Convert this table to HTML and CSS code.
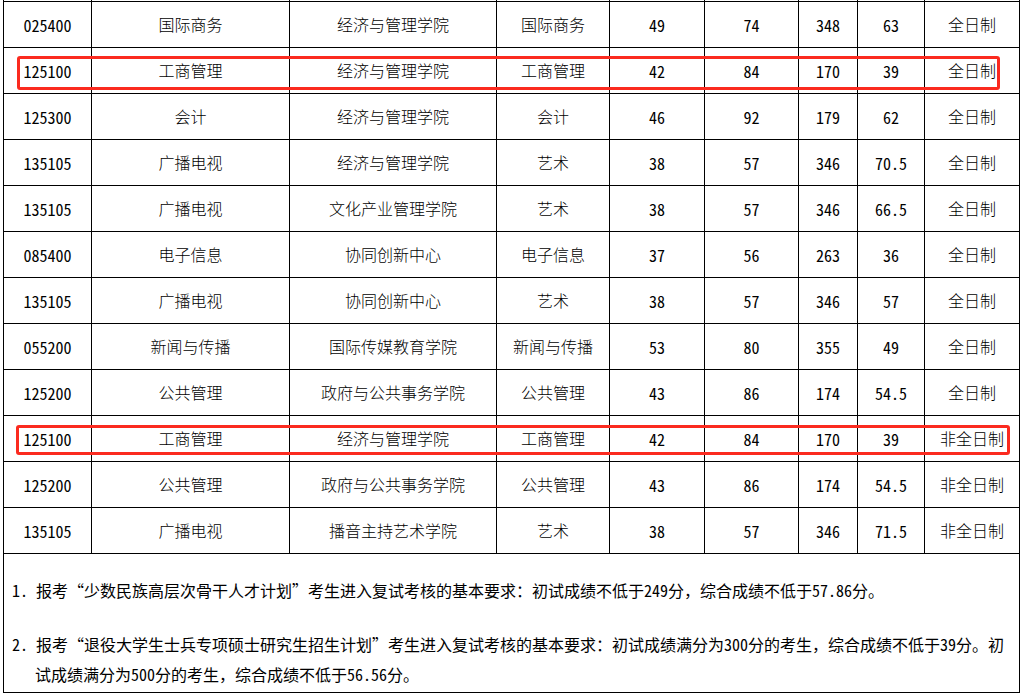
FILE: index.html
```html
<!DOCTYPE html>
<html lang="zh-CN">
<head>
<meta charset="utf-8">
<title>复试基本要求</title>
<link rel="stylesheet" href="styles.css">
</head>
<body>
<div class="wrap">
  <table class="grid">
    <colgroup>
      <col class="c1"><col class="c2"><col class="c3"><col class="c4"><col class="c5"><col class="c6"><col class="c7"><col class="c8"><col class="c9">
    </colgroup>
    <tbody>
      <tr class="cut"><td></td><td></td><td></td><td></td><td></td><td></td><td></td><td></td><td></td></tr>
      <tr><td class="num">025400</td><td>国际商务</td><td>经济与管理学院</td><td>国际商务</td><td class="num">49</td><td class="num">74</td><td class="num">348</td><td class="num">63</td><td>全日制</td></tr>
      <tr><td class="num">125100</td><td>工商管理</td><td>经济与管理学院</td><td>工商管理</td><td class="num">42</td><td class="num">84</td><td class="num">170</td><td class="num">39</td><td>全日制</td></tr>
      <tr><td class="num">125300</td><td>会计</td><td>经济与管理学院</td><td>会计</td><td class="num">46</td><td class="num">92</td><td class="num">179</td><td class="num">62</td><td>全日制</td></tr>
      <tr><td class="num">135105</td><td>广播电视</td><td>经济与管理学院</td><td>艺术</td><td class="num">38</td><td class="num">57</td><td class="num">346</td><td class="num">70.5</td><td>全日制</td></tr>
      <tr><td class="num">135105</td><td>广播电视</td><td>文化产业管理学院</td><td>艺术</td><td class="num">38</td><td class="num">57</td><td class="num">346</td><td class="num">66.5</td><td>全日制</td></tr>
      <tr><td class="num">085400</td><td>电子信息</td><td>协同创新中心</td><td>电子信息</td><td class="num">37</td><td class="num">56</td><td class="num">263</td><td class="num">36</td><td>全日制</td></tr>
      <tr><td class="num">135105</td><td>广播电视</td><td>协同创新中心</td><td>艺术</td><td class="num">38</td><td class="num">57</td><td class="num">346</td><td class="num">57</td><td>全日制</td></tr>
      <tr><td class="num">055200</td><td>新闻与传播</td><td>国际传媒教育学院</td><td>新闻与传播</td><td class="num">53</td><td class="num">80</td><td class="num">355</td><td class="num">49</td><td>全日制</td></tr>
      <tr><td class="num">125200</td><td>公共管理</td><td>政府与公共事务学院</td><td>公共管理</td><td class="num">43</td><td class="num">86</td><td class="num">174</td><td class="num">54.5</td><td>全日制</td></tr>
      <tr><td class="num">125100</td><td>工商管理</td><td>经济与管理学院</td><td>工商管理</td><td class="num">42</td><td class="num">84</td><td class="num">170</td><td class="num">39</td><td>非全日制</td></tr>
      <tr><td class="num">125200</td><td>公共管理</td><td>政府与公共事务学院</td><td>公共管理</td><td class="num">43</td><td class="num">86</td><td class="num">174</td><td class="num">54.5</td><td>非全日制</td></tr>
      <tr><td class="num">135105</td><td>广播电视</td><td>播音主持艺术学院</td><td>艺术</td><td class="num">38</td><td class="num">57</td><td class="num">346</td><td class="num">71.5</td><td>非全日制</td></tr>
      <tr class="notes-row">
        <td colspan="9" class="notes">
          <p class="note">1. 报考“少数民族高层次骨干人才计划”考生进入复试考核的基本要求：初试成绩不低于249分，综合成绩不低于57.86分。</p>
          <p class="note">2. 报考“退役大学生士兵专项硕士研究生招生计划”考生进入复试考核的基本要求：初试成绩满分为300分的考生，综合成绩不低于39分。初<br><span class="cont">试成绩满分为500分的考生，综合成绩不低于56.56分。</span></p>
        </td>
      </tr>
    </tbody>
  </table>
  <div class="mark mark-a"></div>
  <div class="mark mark-b"></div>
</div>
</body>
</html>
```

FILE: styles.css
```css
html, body {
  margin: 0;
  padding: 0;
  background: #ffffff;
}

.wrap {
  position: relative;
  padding-left: 3px;
  font-family: "Noto Sans CJK SC", "Liberation Sans", sans-serif;
  font-weight: 300;
  color: #000;
}

.grid {
  border-collapse: collapse;
  table-layout: fixed;
  width: 1017px;
  font-size: 16px;
}

.c1 { width: 88px; }
.c2 { width: 198px; }
.c3 { width: 207px; }
.c4 { width: 113px; }
.c5 { width: 95px; }
.c6 { width: 94px; }
.c7 { width: 59px; }
.c8 { width: 67px; }
.c9 { width: 95px; }

.grid td {
  border: 1px solid #000;
  height: 44px;
  padding: 0 0 1px 0;
  text-align: center;
  vertical-align: middle;
  white-space: nowrap;
  line-height: 20px;
}

.grid tr.cut td {
  height: 1px;
  padding: 0;
  border-top: 0;
}

.grid td.num {
  font-family: "Noto Sans Mono CJK SC", "Liberation Mono", monospace;
  font-weight: 300;
  font-size: 16px;
  padding-top: 1px;
  padding-bottom: 0;
  height: 44px;
}

.grid td.notes {
  text-align: left;
  height: auto;
  padding: 21px 0 3px 8px;
  font-family: "Noto Sans Mono CJK SC", "Noto Sans CJK SC", sans-serif;
  font-size: 16px;
}

.note {
  margin: 0;
  line-height: 30px;
}

.note + .note {
  margin-top: 24px;
}

.cont {
  padding-left: 23px;
}

.mark {
  position: absolute;
  border: 3px solid #fb2a1f;
  border-radius: 3px;
  box-sizing: border-box;
}

.mark-a {
  left: 17px;
  top: 56px;
  width: 983px;
  height: 34px;
}

.mark-b {
  left: 16px;
  top: 425px;
  width: 994px;
  height: 30px;
}
```
